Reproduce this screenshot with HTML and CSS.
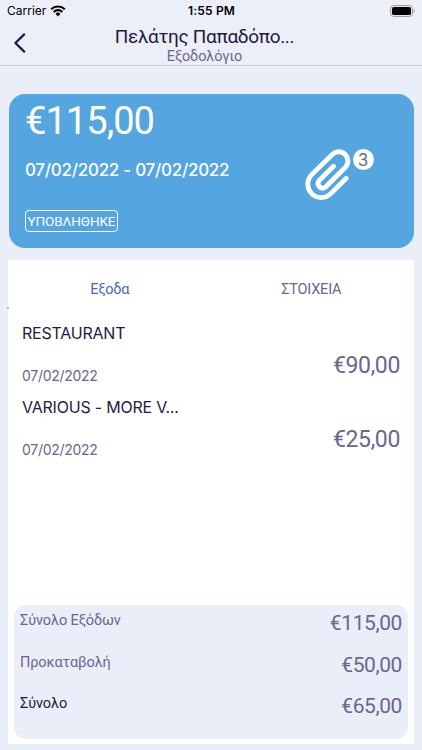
FILE: index.html
```html
<!DOCTYPE html>
<html lang="el">
<head>
    <meta charset="UTF-8">
    <meta name="viewport" content="width=device-width, initial-scale=1.0">
    <title>Εξοδολόγιο</title>
    <link rel="stylesheet" href="styles.css">
</head>
<body>
    <header>
        <!-- Status bar -->
        <div class="status-bar">
            <div class="carrier">
                <span>Carrier</span>
                <svg width="16" height="12" viewBox="0 0 16 12">
                    <path d="M8 11.4L5.5 8.7a3.6 3.6 0 0 1 5 0z"/>
                    <path d="M3.7 6.9a6.2 6.2 0 0 1 8.6 0M1.2 4.2a9.8 9.8 0 0 1 13.6 0" fill="none" stroke="#000" stroke-width="2.1"/>
                </svg>
            </div>
            <strong class="clock">1:55 PM</strong>
            <svg class="battery" width="26" height="12" viewBox="0 0 26 12">
                <rect x="0.6" y="0.6" width="21.8" height="10.8" rx="3" fill="none" stroke="#96979d"/>
                <rect x="2" y="2" width="19" height="8" rx="1.8"/>
                <path d="M23.6 4v4c1.4-.6 1.4-3.4 0-4z" fill="#96979d"/>
            </svg>
        </div>
        <div class="nav-bar">
            <button class="back-btn" aria-label="Πίσω">
                <svg width="14" height="20" viewBox="0 0 14 20">
                    <path d="M11.2 1.4L2.4 10l8.8 8.6" fill="none" stroke="#1e1b41" stroke-width="2.2" stroke-linecap="round" stroke-linejoin="round"/>
                </svg>
            </button>
            <div class="titles">
                <h1>Πελάτης Παπαδόπο...</h1>
                <p>Εξοδολόγιο</p>
            </div>
        </div>
    </header>

    <!-- Report summary -->
    <section class="summary-card">
        <div class="summary-info">
            <div class="summary-total">€115,00</div>
            <div class="summary-dates">07/02/2022 - 07/02/2022</div>
            <span class="status-tag">ΥΠΟΒΛΗΘΗΚΕ</span>
        </div>
        <div class="attachments">
            <svg width="54" height="64" viewBox="0 0 54 64">
                <path d="M46.3 38.3L30.7 53.6a13.4 13.4 0 0 1-19-19L32.5 14.2a9.2 9.2 0 0 1 13 13L25.3 47.3a4.6 4.6 0 0 1-6.4-6.4l14.6-14.6" fill="none" stroke="#fff" stroke-width="4.8" stroke-linecap="round"/>
            </svg>
            <span class="count">3</span>
        </div>
    </section>

    <main class="panel">
        <nav class="tabs">
            <span class="tab active">Εξοδα</span>
            <span class="tab">ΣΤΟΙΧΕΙΑ</span>
            <span class="tab-marker"></span>
        </nav>

        <!-- Expenses -->
        <section class="expense-list">
            <div class="expense">
                <div>
                    <div class="expense-name">RESTAURANT</div>
                    <div class="expense-date">07/02/2022</div>
                </div>
                <div class="amount">€90,00</div>
            </div>
            <div class="expense">
                <div>
                    <div class="expense-name">VARIOUS - MORE V...</div>
                    <div class="expense-date">07/02/2022</div>
                </div>
                <div class="amount">€25,00</div>
            </div>
        </section>

        <!-- Totals -->
        <section class="totals">
            <div class="total-row"><span>Σύνολο Εξόδων</span><span class="total-amount">€115,00</span></div>
            <div class="total-row"><span>Προκαταβολή</span><span class="total-amount">€50,00</span></div>
            <div class="total-row final"><span>Σύνολο</span><span class="total-amount">€65,00</span></div>
        </section>
    </main>
</body>
</html>
```
FILE: styles.css
```css
* {
    box-sizing: border-box;
}

body {
    font-family: Roboto, "Noto Sans", sans-serif;
    background: #e9eef8;
    color: #6a668e;
    margin: 0;
    height: 750px;
    overflow: hidden;
    display: flex;
    flex-direction: column;
}

header {
    height: 66px;
    background: #eceff8;
    border-bottom: 1px solid #cdcfdd;
}

.status-bar {
    display: grid;
    grid-template-columns: 1fr auto 1fr;
    align-items: center;
    height: 21px;
    padding: 0 6px 0 7px;
    font-family: Inter, sans-serif;
    font-size: 12px;
    color: #000;
}

.carrier {
    display: flex;
    align-items: center;
    gap: 4px;
}

.clock {
    font-weight: 600;
    letter-spacing: 0.2px;
}

.battery {
    justify-self: end;
}

.nav-bar {
    display: grid;
    grid-template-columns: 40px 1fr 53px;
}

.back-btn {
    display: block;
    border: none;
    background: none;
    padding: 0 0 0 13px;
    text-align: left;
    height: 44px;
}

.back-btn svg {
    display: block;
}

.titles {
    text-align: center;
}

.titles h1 {
    margin: 5px 0 0;
    font-size: 19px;
    line-height: 22px;
    font-weight: 400;
    letter-spacing: -0.34px;
    color: #1e1b41;
    white-space: nowrap;
}

.titles p {
    margin: 0;
    font-size: 14.5px;
    line-height: 17px;
    letter-spacing: -0.12px;
}

.summary-card {
    display: flex;
    justify-content: space-between;
    height: 154px;
    margin: 28px 8.5px 0;
    padding: 0 40px 0 16.5px;
    background: #55a5e0;
    border-radius: 16px;
    color: #fff;
}

.summary-total {
    font-size: 38px;
    line-height: 44px;
    margin-top: 5px;
    letter-spacing: -0.95px;
}

.summary-dates {
    font-family: Inter, sans-serif;
    font-size: 17px;
    font-weight: 500;
    line-height: 22px;
    margin-top: 16px;
    letter-spacing: -0.27px;
    white-space: nowrap;
}

.status-tag {
    display: block;
    width: 93px;
    height: 22px;
    margin-top: 29px;
    border: 1px solid #fff;
    border-radius: 4px;
    font-size: 13.5px;
    line-height: 20px;
    letter-spacing: -0.1px;
    text-align: center;
}

.attachments {
    display: flex;
    padding-top: 46px;
}

.count {
    width: 21px;
    height: 21px;
    margin: 9px 0 0 -1px;
    border-radius: 50%;
    background: #fff;
    color: #6a668e;
    font-family: Inter, sans-serif;
    font-size: 17px;
    line-height: 22px;
    text-align: center;
}

.panel {
    display: flex;
    flex-direction: column;
    height: 484px;
    margin: 12px 8.5px 0 7.5px;
    padding: 0 5.5px 5px 6.5px;
    background: #fff;
}

.tabs {
    position: relative;
    display: grid;
    grid-template-columns: 1fr 1fr;
    height: 60px;
    margin: 0 -4px 0 -5px;
    line-height: 60px;
    font-size: 14.5px;
    letter-spacing: -0.2px;
    text-align: center;
}

.active {
    color: #4568b8;
}

/* collapsed underline of the selected tab */
.tab-marker {
    position: absolute;
    left: -2px;
    top: 47px;
    width: 2px;
    height: 2px;
    background: #aeb6c4;
}

.expense-list {
    flex: 1;
    padding: 2px 8px 0 8px;
}

.expense {
    display: flex;
    justify-content: space-between;
    height: 73.5px;
    font-family: Inter, sans-serif;
}

.expense-name {
    font-size: 16px;
    line-height: 22px;
    letter-spacing: -0.22px;
    color: #1e1b41;
}

.expense-date {
    margin-top: 22px;
    font-size: 14px;
    line-height: 20px;
    letter-spacing: -0.3px;
}

.amount {
    padding-top: 30px;
    font-family: Roboto, sans-serif;
    font-size: 23px;
    line-height: 28px;
    letter-spacing: -0.35px;
}

.totals {
    height: 134px;
    padding: 5px 6px 0;
    background: #e9eef8;
    border-radius: 12px;
}

.total-row {
    display: flex;
    justify-content: space-between;
    height: 41.5px;
    font-size: 14.5px;
    line-height: 22px;
    letter-spacing: -0.1px;
}

.total-amount {
    font-size: 21px;
    line-height: 27px;
    letter-spacing: -0.4px;
    color: #6a668e;
}

.final {
    color: #1e1b41;
}
```
